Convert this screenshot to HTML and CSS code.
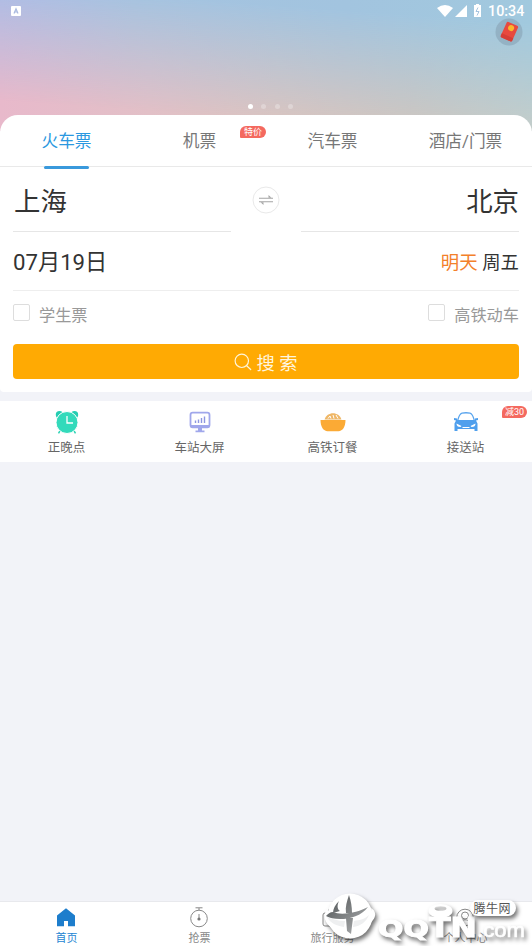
FILE: index.html
```html
<!DOCTYPE html>
<html lang="zh-CN">
<head>
<meta charset="utf-8">
<title>火车票</title>
<link rel="stylesheet" href="styles.css">
</head>
<body>
<div class="app">
  <header class="hero">
    <div class="status">
      <svg class="input-mark" viewBox="0 0 10 10"><rect width="10" height="10" rx="1" fill="#fff"/><path d="M3 7.5L5 2.8 7 7.5M3.8 6H6.2" fill="none" stroke="#a9b9df" stroke-width="1.2"/></svg>
      <span class="spacer"></span>
      <svg width="48" height="14" viewBox="0 0 48 14"><g fill="#fff"><path d="M0 4Q8-2 16 4L8 13Z"/><path d="M30 1V13H18Z"/><path d="M39 0h3v1h2v12h-7V1h2z"/></g><path d="M41 3.500l-2 4h3l-2 4" fill="none" stroke="#a5c3df"/></svg>
      <span class="time">10:34</span>
    </div>
    <svg class="packet" viewBox="0 0 28 28"><circle cx="14" cy="14" r="13.5" fill="#8da9bc" opacity=".75"/><g transform="rotate(24 14 14)"><rect x="8" y="5" width="12.5" height="17" rx="1.5" fill="#e8493f"/><path d="M8 18h12.5v2.5a1.5 1.5 0 0 1-1.5 1.5H9.5A1.5 1.5 0 0 1 8 20.5z" fill="#d63e38"/><circle cx="14.3" cy="9.5" r="3" fill="#fbb62b"/></g></svg>
    <div class="dots"><i class="on"></i><i></i><i></i><i></i></div>
  </header>

  <main class="card">
    <nav class="tabs">
      <div class="tab active">火车票</div>
      <div class="tab">机票<span class="badge sale">特价</span></div>
      <div class="tab">汽车票</div>
      <div class="tab">酒店/门票</div>
    </nav>
    <div class="form">
      <div class="route">
        <div class="city">上海</div>
        <svg class="swap" viewBox="0 0 28 28"><circle cx="14" cy="14" r="13" fill="#fff" stroke="#e9e9e9"/><path d="M7 12.2h14M7 15.8h14" stroke="#a5a5a5" stroke-width="1.1"/><path d="M16.5 9l3 2.7h-3zM11.500 19l-3-2.700h3z" fill="#a5a5a5"/></svg>
        <div class="city to">北京</div>
      </div>
      <div class="date"><span class="day">07月19日</span><span class="week"><b>明天</b> 周五</span></div>
      <div class="options"><label><i></i>学生票</label><label><i></i>高铁动车</label></div>
      <div class="search"><svg width="18" height="18" viewBox="0 0 18 18"><g fill="none" stroke="#fff5d9" stroke-width="1.2" stroke-linecap="round"><circle cx="7.800" cy="7.800" r="6.700"/><path d="M12.700 12.700l4 3.800"/></g></svg><span>搜 索</span></div>
    </div>
  </main>

  <section class="services">
    <div class="service">
      <svg viewBox="0 0 26 24"><g fill="#25cdb2"><circle cx="5.500" cy="4.800" r="3.700"/><circle cx="20.500" cy="4.800" r="3.700"/></g><path d="M6.500 20l-2 3.300M19.500 20l2 3.300" stroke="#32d4b7" stroke-width="1.500"/><circle cx="13" cy="12.500" r="11" fill="#33dabb" stroke="#fff" stroke-width="1"/><path d="M13 6v7h6" fill="none" stroke="#fff" stroke-width="1.300"/></svg>
      <span>正晚点</span>
    </div>
    <div class="service">
      <svg viewBox="0 0 26 24"><rect x="3.500" y="2.700" width="19" height="14.600" rx="2.200" fill="#fff" stroke="#a0a7eb" stroke-width="1.800"/><path d="M3.500 15h19v2.500h-19zM11 18h4v2.500h2.500v1.700h-9v-1.700H11z" fill="#a0a7eb"/><path d="M8.500 10.500v2.500M11.500 9.500V13M14.500 8V13M17.500 6.500V13" stroke="#8d96e0" stroke-width="1.400"/></svg>
      <span>车站大屏</span>
    </div>
    <div class="service">
      <svg viewBox="0 0 26 24"><path d="M4.500 9.500C7 1 19 1 21.500 9.500z" fill="#efb767"/><path d="M8 8.500l2-2.500 1 2.500M13 5l1 3.500M16 5l2 3.500" fill="none" stroke="#fff" stroke-width="1"/><path d="M.5 10h25c0 7-3 11-7 11.200h-11C3.500 21 .5 17 .5 10z" fill="#fbaa35"/></svg>
      <span>高铁订餐</span>
    </div>
    <div class="service">
      <svg viewBox="0 0 26 24"><path d="M4.500 11C6 5 7 3.500 9 3.100Q13 2.400 17 3.100C19 3.500 20 5 21.500 11" fill="#fff" stroke="#5aa5ee" stroke-width="1.300"/><path d="M1 8l3 .5v2l1-.5h16l1 .5v-2l3-.5v2l-2 .5 1.500 3V21h-3v-2h-17v2h-3v-7.500l1.500-3L1 10z" fill="#4f9fed"/><path d="M3.500 13.500l5 2.500-1 1q-4 0-4-3.500M22.500 13.500l-5 2.500 1 1q4 0 4-3.500" fill="#fff"/><path d="M9.500 17.500h7" stroke="#fff" stroke-width="1"/></svg>
      <span>接送站</span><em class="badge off">减30</em>
    </div>
  </section>
  <div class="blank"></div>

  <footer class="bottom">
    <div class="item current"><svg viewBox="0 0 22 22"><path d="M11 1.200l9 7.300v10.700h-7V14H9v5.200H2V8.500z" fill="#1d7dcc"/></svg><span>首页</span></div>
    <div class="item"><svg viewBox="0 0 22 22"><g fill="none" stroke="#888"><circle cx="11" cy="11.500" r="8.300"/><path d="M7.500.8h7M11 1v2M11 7v5"/></g><circle cx="11" cy="12" r="1.600" fill="#777"/></svg><span>抢票</span></div>
    <div class="item"><svg viewBox="0 0 22 22"><g fill="none" stroke="#888"><rect x="2" y="6" width="18" height="13" rx="2"/><path d="M7 6V3h8v3M8 10v5M14 10v5"/></g></svg><span>旅行服务</span></div>
    <div class="item"><svg viewBox="0 0 22 22"><g fill="none" stroke="#888"><circle cx="11" cy="10.500" r="8.300"/><circle cx="11" cy="8.500" r="3.500"/><path d="M5.500 16.500c1-5 10-5 11 0"/></g></svg><span>个人中心</span></div>
  </footer>

  <svg class="brand" width="212" height="56" viewBox="0 0 212 56">
    <defs><linearGradient id="shade" x1="0" y1="0" x2="1" y2="1"><stop offset="0" stop-color="#4c5052"/><stop offset="1" stop-color="#b4b6b7"/></linearGradient></defs>
    <g class="raised">
      <circle cx="30" cy="26" r="22.500"/>
      <path d="M8 18C2 25 4 33 13 39 25 46 45 43 53 30 57 25 55 20 51 18 53 27 41 35 27 35 14 35 7 30 8 18z"/>
      <path fill-rule="evenodd" d="M108.500 21a12 7 0 1 0 24 0a12 7 0 1 0-24 0M114.500 18.500a6 2.300 0 1 1 12 0a6 2.300 0 1 1-12 0"/>
      <text class="brand-name" x="58" y="46.500" font-size="23" textLength="51" lengthAdjust="spacingAndGlyphs">QQ</text>
      <text class="brand-name" x="109" y="46.500" font-size="27" textLength="48" lengthAdjust="spacingAndGlyphs">TN</text>
      <text class="brand-domain" x="157" y="46.500" textLength="48" lengthAdjust="spacingAndGlyphs">.com</text>
    </g>
    <g class="raised"><rect x="150" y="10" width="46" height="16" rx="8"/></g>
    <path d="M29 5C27 11 25 17 26 23L32 23C32 17 31 11 29 5zM19 11C15 15 13 19 13 23L20 21C17 19 17 15 19 11zM13 22C10 22 8 24 6 26 14 31 38 31 48 17 39 22 22 26 13 22zM26 28L27 41 31 44 33 28z" fill="url(#shade)"/>
    <path d="M7 27C10 33 17 36 24 37L25 31C18 31 12 29 7 27zM34 31L33 37C41 36 46 32 49 25 45 29 40 30 34 31z" fill="#eeeff0"/>
    <text class="brand-cn" x="153.500" y="22.500" textLength="37">腾牛网</text>
  </svg>
</div>
</body>
</html>
```
FILE: styles.css
```css
* { box-sizing: border-box; }
body { margin: 0; font-family: Roboto, "Noto Sans CJK SC", sans-serif; color: #333; background: #f2f3f8; }
.app { position: relative; width: 532px; height: 946px; display: flex; flex-direction: column; overflow: hidden; }
.hero { position: relative; height: 131px; flex: none; background: linear-gradient(90deg, #e8b9cb, #e2c0c7 28%, #dac5c1 52%, #d0c7c0 78%, #c7cec9); }
.hero::before { content: ""; position: absolute; inset: 0; background: linear-gradient(90deg, #aabde7, #a5c3e0 25%, #a2c4df 65%, #a1c9de); -webkit-mask-image: linear-gradient(184deg, #000 14%, transparent 82%); mask-image: linear-gradient(184deg, #000 14%, transparent 82%); }
.status { position: relative; height: 22px; display: flex; align-items: center; padding: 0 8px 0 11px; }
.input-mark { width: 10px; height: 10px; }
.spacer { flex: 1; }
.status svg:nth-of-type(2) { margin-right: 3px; }
.time { color: #fff; font-size: 14.300px; font-weight: 500; width: 36px; white-space: nowrap; }
.packet { position: absolute; right: 9px; top: 18px; width: 28px; height: 28px; }
.dots { position: absolute; left: 248px; top: 104px; display: flex; gap: 8.300px; }
.dots i { width: 5px; height: 5px; border-radius: 50%; background: rgba(255,255,255,.28); }
.dots .on { background: #fff; }
.card { position: relative; margin-top: -16px; height: 277px; flex: none; background: #fff; border-radius: 18px 18px 4px 4px; }
.tabs { display: grid; grid-template-columns: repeat(4, 1fr); height: 52px; border-bottom: 1px solid #e9e9e9; }
.tab { position: relative; height: 51px; text-align: center; font-size: 16.700px; line-height: 54px; color: #777; }
.active { color: #2b98e0; }
.active::after { content: ""; position: absolute; left: 44px; bottom: -3px; width: 45px; height: 3px; border-radius: 2px; background: #3999dc; }
.badge { position: absolute; color: #fff; background: #f4695f; font-style: normal; text-align: center; border-radius: 6px 6px 6px 1px; }
.sale { left: 107px; top: 11px; width: 26px; height: 12px; font-size: 9px; line-height: 12px; }
.form { padding: 0 13px; }
.route { height: 65px; display: grid; grid-template-columns: 218px 1fr 218px; grid-template-rows: 65px; justify-items: center; }
.city { justify-self: stretch; height: 65px; border-bottom: 1px solid #e6e6e6; font-size: 26.400px; line-height: 70px; padding-left: 1px; }
.to { text-align: right; padding: 0; }
.swap { width: 28px; height: 28px; margin-top: 19px; }
.date { height: 59px; display: flex; align-items: center; justify-content: space-between; border-bottom: 1px solid #eee; }
.day { font-size: 22.200px; margin-top: -3px; }
.week { font-size: 18.400px; }
.week b { color: #f3802b; font-weight: 400; }
.options { height: 53px; display: flex; justify-content: space-between; padding-bottom: 7px; }
.options label { display: flex; align-items: center; color: #999; font-size: 16.200px; }
.options i { width: 17px; height: 17px; border: 1px solid #ddd; border-radius: 2px; margin: -3px 9px 0 0; }
.search { height: 35px; border-radius: 4px; background: #ffaa03; display: flex; align-items: center; justify-content: center; gap: 4px; color: #fff5df; font-size: 18.300px; }
.services { margin-top: 9px; height: 61px; flex: none; display: grid; grid-template-columns: repeat(4, 1fr); background: #fff; }
.service { position: relative; display: flex; flex-direction: column; align-items: center; padding-top: 9px; font-size: 12.500px; color: #666; }
.service svg { width: 26px; height: 24px; }
.service span { line-height: 18px; margin-top: 5px; }
.off { right: 5px; top: 5px; width: 25px; height: 12px; font-size: 9px; line-height: 12px; }
.blank { flex: 1; }
.bottom { height: 45px; flex: none; border-top: 1px solid #e8e9ed; display: grid; grid-template-columns: repeat(4, 1fr); background: #fff; }
.item { display: flex; flex-direction: column; align-items: center; padding-top: 5px; color: #888; font-size: 11px; }
.item svg { width: 22px; height: 22px; margin-right: 1px; }
.item span { line-height: 16px; margin-top: 2px; }
.current { color: #2585d2; }
.brand { position: absolute; left: 320px; top: 890px; }
.raised { fill: #fff; filter: drop-shadow(2px 3px 2px rgba(0,0,0,.55)); }
.brand-name { font-family: "DejaVu Sans", sans-serif; font-weight: 700; stroke: #fff; stroke-width: 1px; }
.brand-domain { font: 400 21px "Liberation Sans", sans-serif; stroke: #fff; stroke-width: .6px; }
.brand-cn { font: 12px "Noto Sans CJK SC", sans-serif; fill: #555; }
```
